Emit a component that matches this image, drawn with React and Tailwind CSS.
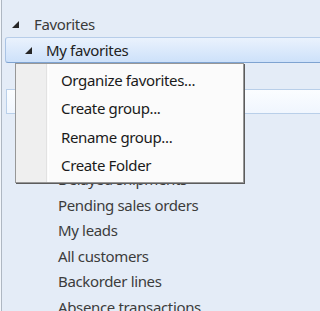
import React from "react";

const Tri = ({ className }) => (
  <svg width="7" height="7" viewBox="0 0 7 7" className={className}>
    <polygon points="7,0 7,7 0,7" fill="#262626" />
  </svg>
);

export default function App() {
  const font = { fontFamily: '"Noto Sans", "Open Sans", sans-serif' };
  const items = [
    "Delayed shipments",
    "Pending sales orders",
    "My leads",
    "All customers",
    "Backorder lines",
    "Absence transactions",
  ];
  const menu = ["Organize favorites...", "Create group...", "Rename group...", "Create Folder"];
  return (
    <div
      className="relative w-[320px] h-[311px] overflow-hidden bg-[#e4ecf7] text-[15px] tracking-[-0.35px] leading-none"
      style={font}
    >
      <div className="absolute left-0 top-0 bottom-0 w-[2px] bg-[#f2f6fb] border-r border-[#aeb7c2]" />
      <div className="flex flex-col pt-[12px]">
        <div className="flex items-center h-[25px] pl-[12px] text-[#3a3a3a]">
          <Tri className="mr-[15px]" />
          <span>Favorites</span>
        </div>
        <div className="ml-[5px] h-[26px] flex items-center pl-[19px] rounded-l-[3px] border-t border-b border-l border-t-[#b7cde9] border-l-[#a9c3e4] border-b-[#7ea3d1] bg-gradient-to-b from-[#eaf2fd] to-[#cde1fa] text-[#222]">
          <Tri className="mr-[14px]" />
          <span>My favorites</span>
        </div>
        <div className="h-[26px]" />
        <div className="ml-[6px] h-[25px] border-t border-b border-l border-[#b9cfe9] bg-gradient-to-b from-[#fbfdff] to-[#f0f6fe]" />
        <div className="flex flex-col pt-[53px] pl-[58px] text-[#3c3c3c]">
          {items.map((t) => (
            <div key={t} className="h-[25.5px] flex items-center">
              {t}
            </div>
          ))}
        </div>
      </div>
      <div className="absolute left-[15px] top-[63px] w-[229px] border border-[#979797] bg-[#fbfbfb] shadow-[1px_1px_0_#5c5c5c] py-[2px]">
        <div className="absolute left-0 top-0 bottom-0 w-[31px] bg-[#efefef] border-r border-[#e2e2e2]" />
        <div className="absolute left-[32px] top-0 bottom-0 w-px bg-white" />
        <div className="relative flex flex-col">
          {menu.map((t) => (
            <div key={t} className="h-[28.5px] flex items-center pl-[45px] text-[#1a1a1a]">
              {t}
            </div>
          ))}
        </div>
      </div>
    </div>
  );
}
